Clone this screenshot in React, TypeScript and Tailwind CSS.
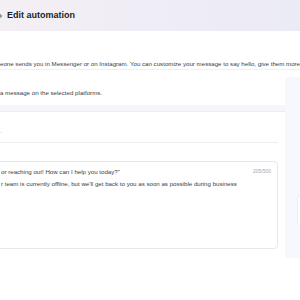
export default function App() {
  return (
    <div className="relative flex h-[300px] w-[300px] flex-col overflow-hidden bg-white font-['Liberation_Sans',Arial,sans-serif] text-[#3a3d42]">
      {/* Header */}
      <div className="flex h-[31px] shrink-0 items-center gap-[4px] bg-gradient-to-r from-[#f4eff4] via-[#efedf6] to-[#ebebf6] pl-0">
        <svg className="-ml-[3px] h-[8px] w-[6px]" viewBox="0 0 6 8" fill="none">
          <path d="M1 1 L4.5 4 L1 7" stroke="#8a8d91" strokeWidth="1.4" strokeLinecap="round" strokeLinejoin="round" />
        </svg>
        <span className="text-[9px] font-bold text-[#1c1e21]">Edit automation</span>
      </div>

      {/* Intro */}
      <div className="flex h-[39px] shrink-0 items-end border-b border-[#f0f0f2] pb-[1px]">
        <p className="whitespace-nowrap text-[6.15px] leading-[8px]">
          eone sends you in Messenger or on Instagram. You can customize your message to say hello, give them more
        </p>
      </div>

      {/* Body row */}
      <div className="flex h-[216px] shrink-0">
        <div className="flex w-[285px] shrink-0 flex-col">
          <div className="flex h-[35px] items-center pt-[11px]">
            <p className="whitespace-nowrap text-[6.15px] leading-[8px]">a message on the selected platforms.</p>
          </div>
          <div className="h-[7px] border-b border-[#ececf4] bg-[#f5f5fa]" />
          <div className="flex flex-col pr-[7px]">
            <div className="flex h-[31px] items-end border-b border-[#eeeef0] pb-[8px]">
              <span className="text-[6px] leading-[6px] text-[#9a9da2]">.</span>
            </div>
            <div className="-ml-[4px] mt-[18px] flex h-[88px] flex-col rounded-[4px] border border-[#e8e8ea] pl-[4px] pr-[6px] pt-[6px]">
              <div className="flex items-start justify-between">
                <p className="whitespace-nowrap text-[6.15px] leading-[8px]">or reaching out! How can I help you today?"</p>
                <span className="text-[5px] leading-[6px] text-[#a5a8ac]">205/500</span>
              </div>
              <p className="mt-[4px] whitespace-nowrap text-[6.15px] leading-[8px]">
                r team is currently offline, but we'll get back to you as soon as possible during business
              </p>
            </div>
          </div>
        </div>
        <div className="mt-[7px] flex h-[181px] flex-1 justify-end rounded-l-[3px] bg-[#f6f8fd] pt-[118px]">
          <div className="h-[30px] w-[3px] rounded-tl-[4px] border-l border-t border-[#eceef4] bg-white" />
        </div>
      </div>

      {/* Footer strips */}
      <div className="h-[28px] shrink-0" />
      <div className="h-[10px] shrink-0 bg-gradient-to-r from-[#dfedf6] via-[#e3f0f2] to-[#e4f3ec]" />
      <div className="h-[1px] shrink-0 bg-[#cdd6da]" />
      <div className="flex h-[3px] shrink-0 bg-gradient-to-r from-[#f3ead9] via-[#f6ece6] to-[#f5e3df]">
        <div className="ml-[200px] h-full w-[16px] bg-white" />
      </div>
    </div>
  );
}
